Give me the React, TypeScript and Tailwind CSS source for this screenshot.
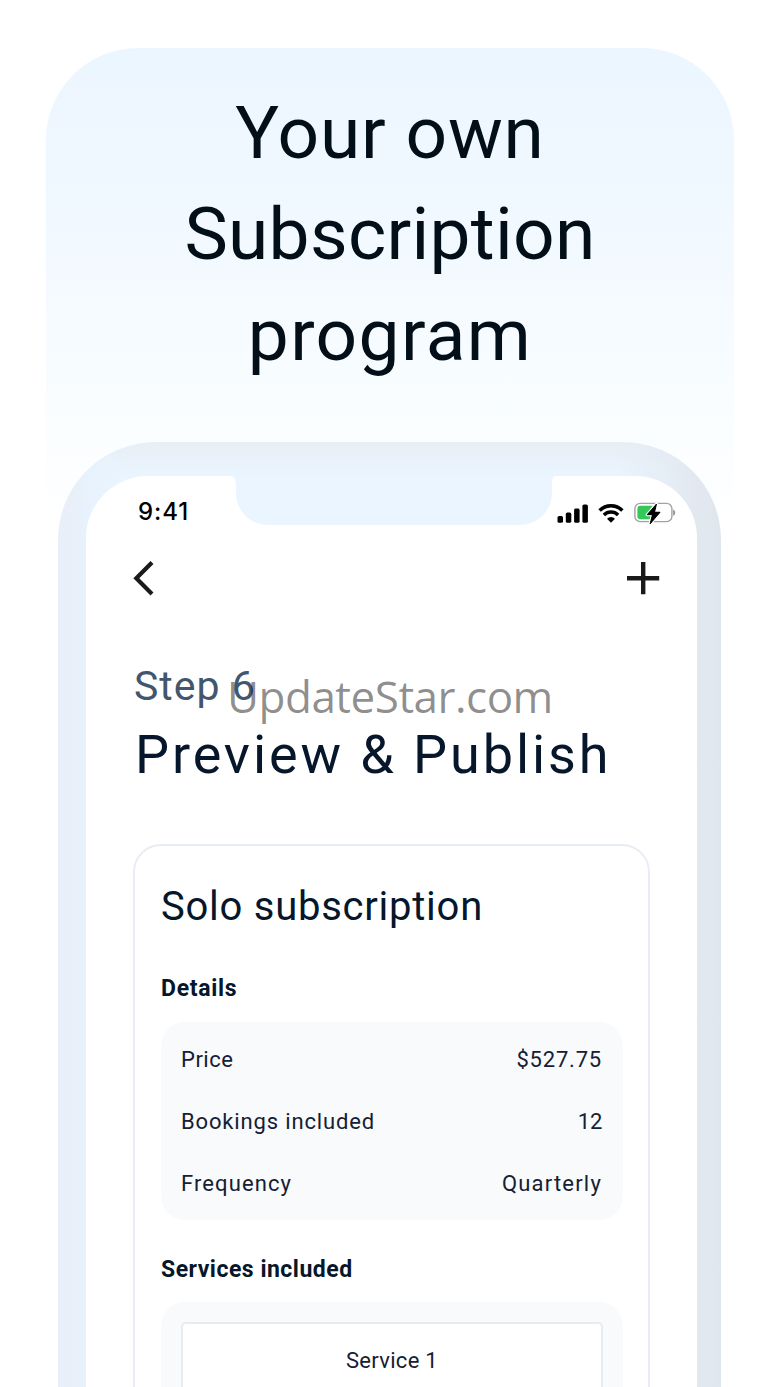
import React from 'react';
import clsx from 'clsx';

const details = [
  { label: 'Price', value: '$527.75', labelClass: 'tracking-[0.5px]', valueClass: 'tracking-[0.8px]' },
  { label: 'Bookings included', value: '12', labelClass: 'tracking-[0.85px]', valueClass: 'tracking-[-0.3px]' },
  { label: 'Frequency', value: 'Quarterly', labelClass: 'tracking-[1.1px]', valueClass: 'tracking-[1.2px]' },
];

function StatusIcons() {
  return (
    <svg width="120" height="24" viewBox="0 0 120 24" fill="none">
      {/* Signal */}
      <g fill="#000">
        <rect x="0.5" y="14" width="5.5" height="6.8" rx="1.6" />
        <rect x="8.8" y="10.6" width="5.5" height="10.2" rx="1.6" />
        <rect x="17.1" y="6.6" width="5.5" height="14.2" rx="1.6" />
        <rect x="25.4" y="2.5" width="5.5" height="18.3" rx="1.6" />
      </g>
      {/* Wifi */}
      <g stroke="#000" strokeWidth="3.5">
        <path d="M42.6 8.4a16.3 16.3 0 0 1 22.8 0" />
        <path d="M46.9 12.9a10.2 10.2 0 0 1 14.2 0" />
      </g>
      <path d="M54 20.8l-4-4.1a5.8 5.8 0 0 1 8 0z" fill="#000" />
      {/* Battery */}
      <rect x="77.9" y="1.4" width="37" height="18.2" rx="5.2" stroke="#a3a3a3" strokeWidth="1.4" />
      <path d="M116.2 7.4c2.6 1.2 2.6 5.2 0 6.4z" fill="#8e8e8e" />
      <rect x="80.4" y="3.8" width="17" height="13.4" rx="3" fill="#34c759" />
      <path
        d="M99.5 2L90.1 12.7h5.3l-2.3 9.2 10-11.7h-5.5z"
        fill="#000"
        stroke="#fff"
        strokeWidth="3"
        strokeLinejoin="round"
        paintOrder="stroke"
      />
      <path
        d="M99.5 2L90.1 12.7h5.3l-2.3 9.2 10-11.7h-5.5z"
        fill="#000"
        stroke="#000"
        strokeWidth="0.8"
        strokeLinejoin="round"
      />
    </svg>
  );
}

function StatusBar() {
  return (
    <div className="flex h-[74px] items-start">
      <div className="w-[150px] pt-6 pl-[52px] font-['Inter',sans-serif] text-2xl leading-6 font-medium tracking-[0.9px] text-black">
        9:41
      </div>
      <div className="relative h-[49px] w-[316px] rounded-b-[32px] bg-[#eaf5ff]">
        <svg className="absolute top-0 -left-1" width="4" height="10" viewBox="0 0 4 10">
          <path d="M0 0h4v10C4 5 3 1 0 0z" fill="#eaf5ff" />
        </svg>
        <svg className="absolute top-0 -right-1" width="4" height="6" viewBox="0 0 4 6">
          <path d="M4 0H0v6C0 3 1 .5 4 0z" fill="#eaf5ff" />
        </svg>
      </div>
      <div className="pt-[26px] pl-[5px]">
        <StatusIcons />
      </div>
    </div>
  );
}

function NavBar() {
  return (
    <div className="flex h-14 items-center justify-between pr-[37px] pl-[46px]">
      <button>
        <svg width="24" height="36" viewBox="0 0 24 36" fill="none">
          <path d="M20 2.5L4.3 18.2 20 34" stroke="#1a1a1a" strokeWidth="4.2" />
        </svg>
      </button>
      <button>
        <svg width="34" height="34" viewBox="0 0 34 34" fill="none">
          <path d="M17.2 1v32.2M1 17.2h32.2" stroke="#1a1a1a" strokeWidth="4.4" />
        </svg>
      </button>
    </div>
  );
}

function Heading({ children, className }: { children: React.ReactNode; className?: string }) {
  return (
    <h3 className={clsx('text-[23px] leading-8 font-bold whitespace-nowrap', className)}>{children}</h3>
  );
}

function SubscriptionCard() {
  return (
    <div className="mt-[54px] mr-[47px] ml-[47px] h-[600px] rounded-[28px] border-2 border-[#e8ecf4] pt-[37px] pr-[25px] pl-[26px]">
      <h2 className="text-[40px] leading-[48px] tracking-[0.75px] whitespace-nowrap">Solo subscription</h2>

      <Heading className="mt-[42px] tracking-[0.7px]">Details</Heading>
      <div className="mt-[17px] rounded-3xl bg-[#f8fafc] px-5 pt-[7px] pb-[5px]">
        {details.map((row) => (
          <div
            key={row.label}
            className="flex justify-between pr-px text-[22px] leading-[62px] text-[#142033]"
          >
            <span className={row.labelClass}>{row.label}</span>
            <span className={row.valueClass}>{row.value}</span>
          </div>
        ))}
      </div>

      <Heading className="mt-[34px] tracking-[0.5px]">Services included</Heading>
      <div className="mt-4 h-[200px] rounded-3xl bg-[#f8fafc] px-5 pt-5">
        <div className="h-[150px] rounded-[5px] border-2 border-[#e8ecf0] bg-white pt-[6px] text-center text-[22px] leading-[62px] tracking-[0.3px] text-[#142033]">
          Service 1
        </div>
      </div>
    </div>
  );
}

export default function App() {
  return (
    <div className="h-[1387px] w-[780px] overflow-hidden bg-white px-[46px] pt-12 font-['Roboto',sans-serif] text-[#06162b]">
      <main className="rounded-t-[92px] bg-[linear-gradient(180deg,#ecf6ff_0px,#f2f9ff_200px,#f9fdff_360px,#ffffff_480px)] pt-[35px]">
        <h1 className="text-center text-[73px] leading-[101px] text-[#020e18]">
          <span className="tracking-[0.8px]">Your own</span>
          <br />
          <span className="tracking-[0.3px]">Subscription</span>
          <br />
          <span className="tracking-[1.4px]">program</span>
        </h1>

        {/* Phone */}
        <div className="mt-[56px] mr-[13px] ml-3 rounded-t-[98px] bg-[linear-gradient(90deg,#e8eff8_0px,#e8f0f9_20px,#e7f2fd_28px,#e8f0f900_70px,#e1e8ef00_560px,#e2e8f0_640px,#dfe7ee_663px),linear-gradient(180deg,#e8eff4_0px,#eaf5ff_36px)] pt-[34px] pr-6 pl-7">
          <div className="relative h-[1000px] rounded-t-[62px] bg-white">
            <StatusBar />
            <NavBar />
            <div className="pt-[55px] pl-12 whitespace-nowrap">
              <p className="text-[41px] leading-[50px] tracking-[1px] text-[#42566d]">Step 6</p>
              <h2 className="mt-[9px] ml-px text-[54px] leading-[70px] tracking-[2.9px]">Preview &amp; Publish</h2>
            </div>
            <SubscriptionCard />

            {/* Watermark */}
            <span className="absolute top-[198px] left-[141px] font-['Open_Sans',sans-serif] text-[44px] leading-[44px] tracking-[-0.5px] text-black/45">
              UpdateStar.com
            </span>
          </div>
        </div>
      </main>
    </div>
  );
}
